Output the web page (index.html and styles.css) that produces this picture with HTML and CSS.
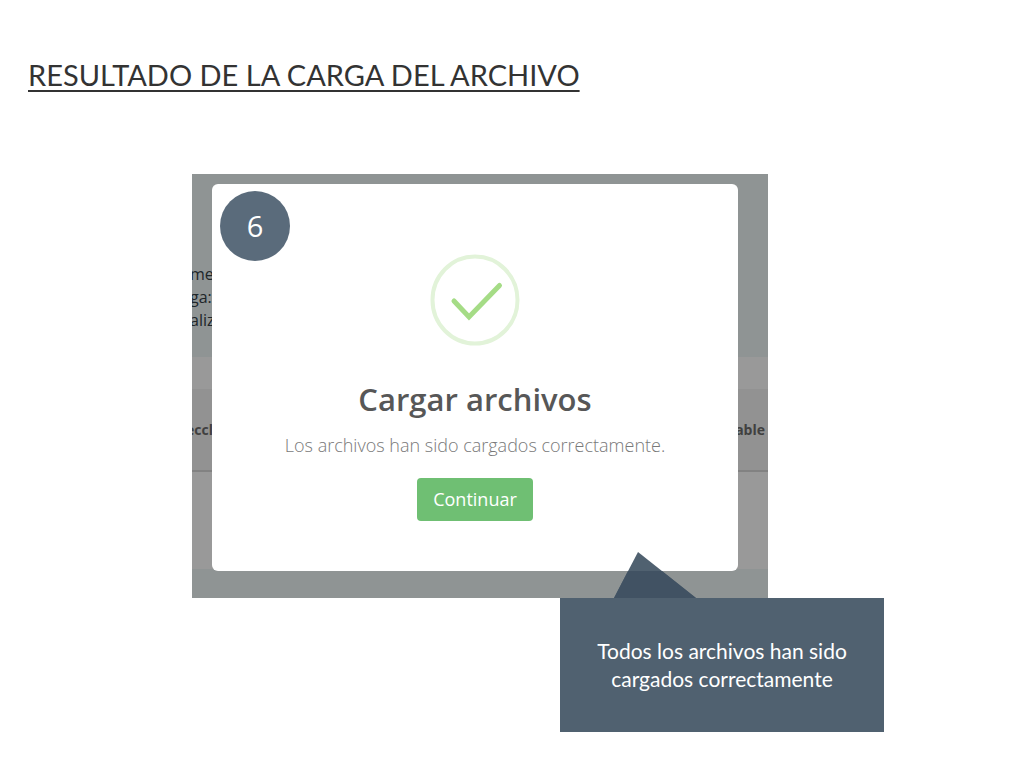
FILE: index.html
```html
<!DOCTYPE html>
<html lang="es">
<head>
  <meta charset="UTF-8">
  <title>Resultado de la carga del archivo</title>
  <link rel="stylesheet" href="styles.css">
</head>
<body>
  <main class="slide">
    <h1 class="slide-title">RESULTADO DE LA CARGA DEL ARCHIVO</h1>

    <section class="screen">
      <!-- page under the overlay -->
      <div class="page-info">
        <p>me</p>
        <p>ga:</p>
        <p>aliz</p>
      </div>
      <div class="page-gap"></div>
      <div class="page-head">
        <span>eccl</span>
        <span>able</span>
      </div>
      <div class="page-row"></div>
      <div class="page-foot"></div>

      <div class="modal" role="dialog" aria-labelledby="modalTitle">
        <svg class="modal-icon" viewBox="0 0 90 92" aria-hidden="true">
          <ellipse cx="45" cy="46" rx="42.5" ry="43.5" fill="none" stroke="#e2f3d9" stroke-width="4"/>
          <path d="M24 47 L39 63 L69.5 31.5" fill="none" stroke="#a5dc86" stroke-width="5" stroke-linecap="round"/>
        </svg>
        <h2 class="modal-title" id="modalTitle">Cargar archivos</h2>
        <p class="modal-text">Los archivos han sido cargados correctamente.</p>
        <button class="modal-btn" type="button">Continuar</button>
      </div>
      <div class="step">6</div>
    </section>

    <aside class="callout">
      <svg class="callout-tip" viewBox="0 0 82 46" aria-hidden="true">
        <path d="M0 46 L24 0 L82 46 Z" fill="#506170"/>
        <path d="M0 46 L14 19 L48 19 L82 46 Z" fill="#415263"/>
      </svg>
      <p>Todos los archivos han sido cargados correctamente</p>
    </aside>
  </main>
</body>
</html>
```
FILE: styles.css
```css
* {
  box-sizing: border-box;
}
body {
  margin: 0;
  background: #fff;
  font-family: Lato, "Liberation Sans", sans-serif;
}
h1, h2, p {
  margin: 0;
  font-weight: normal;
}
.slide {
  padding: 55px 28px 36px;
}
.slide-title {
  color: #333;
  font-size: 29px;
  line-height: 40px;
  text-decoration: underline;
  text-decoration-thickness: 2px;
  text-underline-offset: 4px;
}

/* screenshot of the upload page */
.screen {
  position: relative;
  max-width: 576px;
  margin: 79px 0 0 164px;
  overflow: hidden;
  font-family: "Open Sans", sans-serif;
}
.page-info {
  height: 183px;
  padding-top: 89px;
  background: #8f9494;
  color: #20262a;
  font-size: 16px;
  line-height: 23px;
}
.page-info p {
  margin-left: -2px;
}
.page-gap {
  height: 32px;
  background: #999;
}
.page-head {
  display: flex;
  justify-content: space-between;
  align-items: center;
  height: 83px;
  padding-right: 3px;
  border-bottom: 2px solid #828282;
  background: #929292;
  color: #404040;
  font-size: 14px;
  font-weight: bold;
}
.page-head span:first-child {
  margin-left: -6px;
}
.page-row {
  height: 97px;
  background: #999;
}
.page-foot {
  height: 29px;
  background: #8f9494;
}

.modal {
  position: absolute;
  top: 10px;
  right: 30px;
  bottom: 27px;
  left: 20px;
  display: flex;
  flex-direction: column;
  align-items: center;
  padding-top: 70px;
  border-radius: 6px;
  background: #fff;
}
.modal-icon {
  width: 90px;
  height: 92px;
}
.modal-title {
  margin-top: 31px;
  color: #575757;
  font-size: 31px;
  font-weight: 600;
  line-height: 44px;
}
.modal-text {
  margin-top: 12px;
  color: #797979;
  font-size: 18px;
  font-weight: 300;
  line-height: 24px;
}
.modal-btn {
  margin-top: 21px;
  padding: 0 16px;
  border: none;
  border-radius: 4px;
  background: #6fbf73;
  color: #fff;
  font-family: inherit;
  font-size: 18px;
  font-weight: 500;
  line-height: 43px;
  cursor: pointer;
}
.step {
  position: absolute;
  top: 17px;
  left: 28px;
  width: 70px;
  height: 70px;
  border-radius: 50%;
  background: #5a6b7b;
  color: #fff;
  font-size: 29px;
  line-height: 70px;
  text-align: center;
}

.callout {
  position: relative;
  display: flex;
  align-items: center;
  max-width: 324px;
  min-height: 134px;
  margin-left: 532px;
  padding: 0 32px;
  background: #506170;
  color: #fff;
  font-size: 21px;
  line-height: 28px;
  text-align: center;
}
.callout-tip {
  position: absolute;
  bottom: 100%;
  left: 54px;
  width: 82px;
  height: 46px;
}
```
